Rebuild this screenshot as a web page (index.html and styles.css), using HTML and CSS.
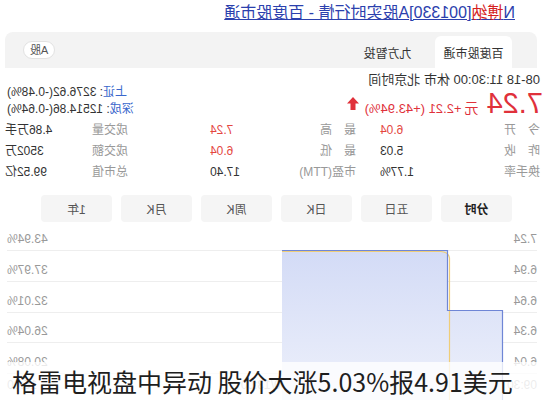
FILE: index.html
```html
<!DOCTYPE html>
<html lang="zh-CN">
<head>
<meta charset="utf-8">
<title>博纳 实时行情</title>
<link rel="stylesheet" href="styles.css">
</head>
<body>
<div class="page">
  <div class="title"><a class="title-link" href="#">N<em class="hl">博纳</em>[001330]A股实时行情 - 百度股市通</a></div>
  <div class="tabbar">
    <div class="tab active">百度股市通</div>
    <div class="tab">九方智投</div>
    <div class="market">A股</div>
  </div>
  <div class="quote">
    <div class="quote-head">
      <div class="quote-main">
        <div class="time">08-18 11:30:00 休市 北京时间</div>
        <div class="price-line">
          <span class="price">7.24</span><span class="unit">元</span><span class="change">+2.21 (+43.94%)</span>
          <svg class="arrow" viewBox="0 0 12 13"><polygon points="6,0 12,6.5 8.5,6.5 8.5,13 3.5,13 3.5,6.5 0,6.5"/></svg>
        </div>
      </div>
      <div class="indices">
        <div><span class="idx-name">上证</span>: 3276.62(-0.48%)</div>
        <div><span class="idx-name">深成</span>: 12514.86(-0.64%)</div>
      </div>
    </div>
    <div class="stats">
      <span class="lbl"><span class="j">今开</span></span><span class="val red">6.04</span>
      <span class="lbl c2"><span class="j">最高</span></span><span class="val red">7.24</span>
      <span class="lbl c3">成交量</span><span class="val">4.86万手</span>
      <span class="lbl"><span class="j">昨收</span></span><span class="val">5.03</span>
      <span class="lbl c2"><span class="j">最低</span></span><span class="val red">6.04</span>
      <span class="lbl c3">成交额</span><span class="val">3502万</span>
      <span class="lbl">换手率</span><span class="val">1.77%</span>
      <span class="lbl c2">市盈(TTM)</span><span class="val">17.40</span>
      <span class="lbl c3">总市值</span><span class="val">99.52亿</span>
    </div>
  </div>
  <div class="periods">
    <div class="period active">分时</div>
    <div class="period">五日</div>
    <div class="period">日K</div>
    <div class="period">周K</div>
    <div class="period">月K</div>
    <div class="period">1年</div>
  </div>
  <div class="chart">
    <div class="grid-row"><span>7.24</span><span>43.94%</span></div>
    <div class="grid-row"><span>6.94</span><span>37.97%</span></div>
    <div class="grid-row"><span>6.64</span><span>32.01%</span></div>
    <div class="grid-row"><span>6.34</span><span>26.04%</span></div>
    <div class="grid-row"><span>6.04</span><span>20.08%</span></div>
    <div class="x-axis"><span>09:30</span><span>11:30/13:00</span><span>15:00</span></div>
    <svg class="plot" viewBox="0 0 547 180">
      <defs>
        <linearGradient id="fillg" x1="0" y1="0" x2="0" y2="1">
          <stop offset="0" stop-color="#d3dbf6"/>
          <stop offset="1" stop-color="#eef1fb"/>
        </linearGradient>
      </defs>
      <path class="area" d="M44,88.5 L99.5,88.5 L99.5,28.5 L265,28.5 L265,180 L44,180 Z"/>
      <path class="avg" d="M97.5,180 L97.5,36 Q98.5,30 106,29.5 L265,29.5"/>
      <path class="line" d="M44.5,180 L44.5,88.5 L99.5,88.5 L99.5,28.5 L265,28.5"/>
    </svg>
  </div>
</div>
<div class="caption">格雷电视盘中异动 股价大涨5.03%报4.91美元</div>
</body>
</html>
```
FILE: styles.css
```css
body {
  margin: 0;
  width: 547px;
  height: 400px;
  overflow: hidden;
  position: relative;
  background: #fff;
  color: #333;
  font-family: "Liberation Sans", "Noto Sans CJK SC", sans-serif;
}

.page {
  width: 547px;
  height: 400px;
  transform: scaleX(-1);
}

.title {
  box-sizing: border-box;
  height: 32px;
  padding: 3px 0 0 32px;
  font-size: 16px;
  line-height: 20px;
}

.title-link {
  color: #2b40ad;
  text-decoration: underline;
}

.hl {
  font-style: normal;
  color: #d61f1f;
}

.tabbar {
  height: 36px;
  margin: 0 5px 0 10px;
  padding-left: 25px;
  background: #f3f3f3;
  border-radius: 8px 8px 0 0;
  display: flex;
  align-items: flex-end;
  gap: 9px;
}

.tab {
  width: 77px;
  height: 32px;
  display: flex;
  align-items: center;
  justify-content: center;
  font-size: 12px;
  color: #333;
}

.tab.active {
  background: #fff;
  border-radius: 6px 6px 0 0;
}

.market {
  margin-left: auto;
  margin-right: 18px;
  align-self: center;
  height: 16px;
  padding: 0 6px;
  line-height: 16px;
  font-size: 11px;
  color: #555;
  background: #fff;
  border: 1px solid #e2e2e2;
  border-radius: 9px;
}

.quote {
  padding: 4px 5px 0 7px;
}

.quote-head {
  display: flex;
  justify-content: space-between;
}

.time {
  font-size: 13px;
  line-height: 16px;
  color: #333;
}

.price-line {
  display: flex;
  align-items: baseline;
  height: 30px;
  line-height: 30px;
  color: #e0313b;
}

.price {
  font-size: 29px;
  margin-left: -3px;
}

.unit {
  font-size: 14px;
  margin: 0 3px 0 8px;
}

.change {
  font-size: 13px;
}

.arrow {
  width: 12px;
  height: 13px;
  margin-left: 6px;
  align-self: center;
  fill: #e0313b;
}

.indices {
  padding: 12px 2px 0 0;
  font-size: 12px;
  line-height: 17px;
  text-align: right;
  color: #333;
}

.idx-name {
  color: #3a67cc;
}

.stats {
  display: grid;
  grid-template-columns: 80px 80px 104px 66px 152px 53px;
  margin-top: 2px;
  font-size: 12px;
  line-height: 21px;
}

.lbl {
  color: #999;
  white-space: nowrap;
}

.j {
  display: inline-block;
  width: 36px;
  text-align: justify;
  text-align-last: justify;
}

.val {
  text-align: right;
  color: #333;
  white-space: nowrap;
}

.val.red {
  color: #e4473f;
}

.c2 {
  padding-left: 24px;
}

.c3 {
  padding-left: 82px;
}

.periods {
  display: flex;
  gap: 9px;
  margin-top: 12px;
  padding-left: 35px;
}

.period {
  width: 71px;
  height: 27px;
  display: flex;
  align-items: center;
  justify-content: center;
  background: #f5f5f5;
  border-radius: 4px;
  font-size: 12px;
  color: #555;
}

.period.active {
  font-weight: bold;
  color: #222;
}

.chart {
  position: relative;
  margin: 0 7px 0 10px;
}

.grid-row {
  box-sizing: border-box;
  height: 30.75px;
  padding-bottom: 4px;
  border-bottom: 1px solid #eee;
  display: flex;
  justify-content: space-between;
  align-items: flex-end;
  font-size: 12px;
  line-height: 14px;
  color: #999;
}

.grid-row:first-child {
  height: 29px;
}

.x-axis {
  display: flex;
  justify-content: space-between;
  padding-top: 4px;
  font-size: 12px;
  line-height: 14px;
  color: #aaa;
}

.plot {
  position: absolute;
  left: -10px;
  top: 0;
  width: 547px;
  height: 180px;
}

.area {
  fill: url(#fillg);
}

.avg {
  fill: none;
  stroke: #efcd78;
  stroke-width: 1.2;
}

.line {
  fill: none;
  stroke: #6f86d6;
  stroke-width: 1.2;
}

.caption {
  position: absolute;
  left: 0;
  right: 0;
  bottom: 0;
  height: 38px;
  padding-left: 12px;
  background: rgba(255, 255, 255, 0.78);
  font-family: "Noto Sans CJK SC", sans-serif;
  font-size: 25px;
  line-height: 38px;
  color: #1e1e1e;
  white-space: nowrap;
}
```
